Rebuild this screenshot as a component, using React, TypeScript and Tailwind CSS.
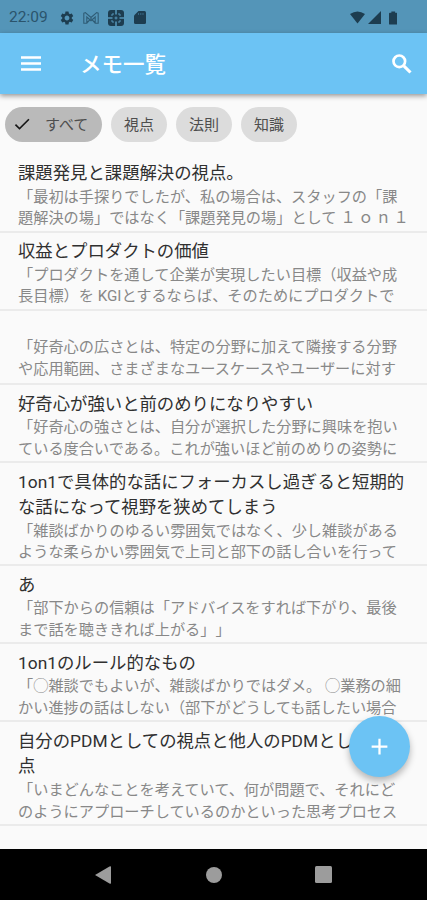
import { MdAdd, MdCheck, MdSettings } from 'react-icons/md';
import clsx from 'clsx';

type Memo = {
  title: string[];
  body: string[];
};

const categories = ['視点', '法則', '知識'];

const memos: Memo[] = [
  {
    title: ['課題発見と課題解決の視点。'],
    body: ['「最初は手探りでしたが、私の場合は、スタッフの「課', '題解決の場」ではなく「課題発見の場」として１ｏｎ１'],
  },
  {
    title: ['収益とプロダクトの価値'],
    body: ['「プロダクトを通して企業が実現したい目標（収益や成', '長目標）を KGIとするならば、そのためにプロダクトで'],
  },
  {
    title: [],
    body: ['「好奇心の広さとは、特定の分野に加えて隣接する分野', 'や応用範囲、さまざまなユースケースやユーザーに対す'],
  },
  {
    title: ['好奇心が強いと前のめりになりやすい'],
    body: ['「好奇心の強さとは、自分が選択した分野に興味を抱い', 'ている度合いである。これが強いほど前のめりの姿勢に'],
  },
  {
    title: ['1on1で具体的な話にフォーカスし過ぎると短期的', 'な話になって視野を狭めてしまう'],
    body: ['「雑談ばかりのゆるい雰囲気ではなく、少し雑談がある', 'ような柔らかい雰囲気で上司と部下の話し合いを行って'],
  },
  {
    title: ['あ'],
    body: ['「部下からの信頼は「アドバイスをすれば下がり、最後', 'まで話を聴ききれば上がる」」'],
  },
  {
    title: ['1on1のルール的なもの'],
    body: ['「◯雑談でもよいが、雑談ばかりではダメ。 ◯業務の細', 'かい進捗の話はしない（部下がどうしても話したい場合'],
  },
  {
    title: ['自分のPDMとしての視点と他人のPDMとしての視', '点'],
    body: ['「いまどんなことを考えていて、何が問題で、それにど', 'のようにアプローチしているのかといった思考プロセス'],
  },
];

function StatusBar() {
  return (
    <div className="flex h-[33px] shrink-0 items-center bg-[#5495b8] pt-[2px] pr-[30px] pl-[9px] text-[#1d3d50]">
      <span className="w-[50px] text-[15.500px] leading-none text-[#2b546c]">22:09</span>
      <MdSettings className="size-[16px]" />
      <svg className="ml-[8px] h-[12px] w-[16px]" viewBox="0 0 16 12" fill="none" stroke="#2f5c75" strokeWidth="1.100">
        <path d="M.8 1.200 2.300.6 8 5.500 13.700.6l1.500.6v10h-3V5L8 8.700 3.800 5v6.200h-3ZM3.800 11 8 6.500l4.200 4.500" />
      </svg>
      <svg className="ml-[9px] size-[16px]" viewBox="0 0 16 16">
        <rect width="16" height="16" rx="3" fill="currentColor" />
        <path d="M8 0v4.500M8 11.500V16M0 8h4.500M11.500 8H16" stroke="#5495b8" strokeWidth="1.600" />
        <path d="M4 6V4h2M10 4h2v2M12 10v2h-2M6 12H4v-2M8 6.500v3M6.500 8h3" stroke="#5495b8" fill="none" />
      </svg>
      <svg className="ml-[10px] h-[13px] w-[12px]" viewBox="0 0 12 13" fill="currentColor">
        <path d="M4.500 0h6Q12 0 12 1.500v10q0 1.500-1.500 1.500h-9Q0 13 0 11.500v-7Z" />
        <path d="M4.500 2v2M6.800 2v2M9 2v2" stroke="#5495b8" strokeWidth=".5" />
      </svg>
      <svg className="ml-auto h-[13px] w-[15px]" viewBox="0 0 16 13" fill="currentColor">
        <path d="M0 2.800Q8-2.600 16 2.800L8 13Z" />
      </svg>
      <svg className="ml-[3px] size-[13px]" viewBox="0 0 13 13" fill="currentColor">
        <path d="M13 0v13H0Z" />
      </svg>
      <svg className="ml-[8px] h-[14px] w-[8.500px]" viewBox="0 0 9 14" fill="currentColor">
        <path d="M2.500 1.500V0h4v1.500H8q1 0 1 1V13q0 1-1 1H1q-1 0-1-1V2.500q0-1 1-1Z" />
      </svg>
    </div>
  );
}

function AppBar() {
  return (
    <header className="relative flex h-[61px] shrink-0 items-center bg-[#6cc3f4] pr-[15.500px] pl-[21px] text-white shadow-[0_2px_5px_rgba(0,0,0,0.4)]">
      <svg className="h-[15px] w-[20px]" viewBox="0 0 20 15" stroke="currentColor" strokeWidth="2.600">
        <path d="M0 1.500h20M0 7.500h20M0 13.500h20" />
      </svg>
      <h1 className="ml-[39px] pt-[3px] text-[21.500px] leading-none font-medium">メモ一覧</h1>
      <svg className="ml-auto size-[20px]" viewBox="0 0 20 20" fill="none" stroke="currentColor" strokeWidth="2.700">
        <circle cx="7.300" cy="7.300" r="5.800" />
        <path d="m11.800 11.800 6.700 6.700" strokeWidth="3.100" />
      </svg>
    </header>
  );
}

function Chip({ label, selected }: { label: string; selected?: boolean }) {
  return (
    <button
      className={clsx(
        'flex h-[35px] items-center rounded-full pt-[2px] text-[15px] text-[#4e4e4e]',
        selected ? 'w-[97px] bg-[#bababa] pl-[7px]' : 'w-[56px] justify-center bg-[#dcdcdc]'
      )}
    >
      {selected && <MdCheck className="mr-[13px] -mt-[3px] size-[20px] text-[#161616]" />}
      {label}
    </button>
  );
}

function MemoRow({ memo }: { memo: Memo }) {
  return (
    <li
      className={clsx(
        'border-b-2 border-[#ebebeb] pl-[18px] whitespace-nowrap',
        memo.title.length === 0 && 'h-[74.600px] pt-[26.500px]',
        memo.title.length === 1 && 'h-[78px] pt-[6.600px]',
        memo.title.length === 2 && 'h-[103.300px] pt-[6.600px]'
      )}
    >
      {memo.title.map((line) => (
        <p key={line} className="text-[17.370px] leading-[25.400px] text-[#303030]">
          {line}
        </p>
      ))}
      {memo.body.map((line) => {
        const [text, wide] = line.split('１ｏｎ１');
        return (
          <p key={line} className="text-[15.200px] leading-[21.700px] text-[#888888]">
            {text}
            {wide !== undefined && <span className="ml-[4px] tracking-[2.500px]">１ｏｎ１</span>}
          </p>
        );
      })}
    </li>
  );
}

function NavigationBar() {
  return (
    <nav className="flex h-[51px] shrink-0 items-center bg-black pl-[95px] text-[#9c9c9c]">
      <svg className="h-[18px] w-[16px]" viewBox="0 0 16 18" fill="currentColor">
        <path d="M0 9 14.500.5Q16-.2 16 1v16q0 1.200-1.500.5Z" />
      </svg>
      <div className="ml-[95px] size-[16px] rounded-full bg-[#9c9c9c]" />
      <div className="ml-[93px] size-[17px] rounded-[1.500px] bg-[#9c9c9c]" />
    </nav>
  );
}

export default function App() {
  return (
    <div
      className="relative flex h-[900px] w-[427px] flex-col overflow-hidden bg-[#fafafa] font-['Roboto','Noto_Sans_CJK_JP',sans-serif] [font-feature-settings:'chws'_0,'halt'_0] [text-spacing-trim:space-all]"
      lang="ja"
    >
      <StatusBar />
      <AppBar />

      <main className="min-h-0 flex-1 overflow-hidden">
        <div className="flex gap-[9px] pt-[13px] pb-[12.600px] pl-[5px]">
          <Chip label="すべて" selected />
          {categories.map((category) => (
            <Chip key={category} label={category} />
          ))}
        </div>

        <ul>
          {memos.map((memo) => (
            <MemoRow key={memo.body[0]} memo={memo} />
          ))}
        </ul>
      </main>

      {/* Add memo */}
      <button className="absolute top-[716px] left-[349px] flex size-[61px] items-center justify-center rounded-full bg-[#6cc3f4] text-white shadow-[0_4px_7px_rgba(0,0,0,0.28)]">
        <MdAdd className="size-[27px]" />
      </button>

      <NavigationBar />
    </div>
  );
}
